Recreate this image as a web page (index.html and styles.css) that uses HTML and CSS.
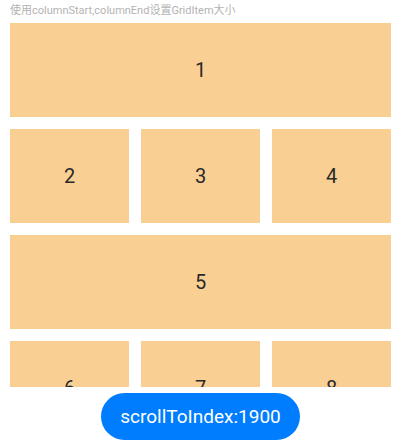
FILE: index.html
```html
<!DOCTYPE html>
<html>
<head>
<meta charset="utf-8">
<link rel="stylesheet" href="styles.css">
</head>
<body>
<div class="page">
  <div class="title">使用columnStart,columnEnd设置GridItem大小</div>
  <div class="grid-wrap">
    <div class="grid">
      <div class="item span3">1</div>
      <div class="item">2</div>
      <div class="item">3</div>
      <div class="item">4</div>
      <div class="item span3">5</div>
      <div class="item">6</div>
      <div class="item">7</div>
      <div class="item">8</div>
      <div class="item span3">9</div>
    </div>
  </div>
  <div class="btn-row">
    <button class="btn">scrollToIndex:1900</button>
  </div>
</div>
</body>
</html>
```
FILE: styles.css
```css
html, body {
  margin: 0;
  padding: 0;
  background: #ffffff;
}
.page {
  width: 400px;
  height: 443px;
  display: flex;
  flex-direction: column;
  font-family: Roboto, "Noto Sans CJK SC", sans-serif;
}
.title {
  margin: 3px 0 0 10px;
  height: 20px;
  font-size: 11px;
  line-height: 16px;
  color: #b3b3b3;
  white-space: nowrap;
}
.grid-wrap {
  margin-left: 10px;
  width: 381px;
  height: 364px;
  overflow: hidden;
}
.grid {
  display: grid;
  grid-template-columns: repeat(3, 119px);
  grid-auto-rows: 94px;
  column-gap: 12px;
  row-gap: 12px;
}
.item {
  background: #f9cf93;
  display: flex;
  align-items: center;
  justify-content: center;
  font-size: 20px;
  color: #2a2a2a;
}
.span3 {
  grid-column: 1 / span 3;
}
.btn-row {
  display: flex;
  justify-content: center;
  padding-top: 6px;
  padding-left: 1px;
}
.btn {
  width: 199px;
  height: 47px;
  border: none;
  border-radius: 24px;
  background: #007dff;
  color: #ffffff;
  font-family: Roboto, sans-serif;
  font-size: 19px;
  padding: 0;
}
```
